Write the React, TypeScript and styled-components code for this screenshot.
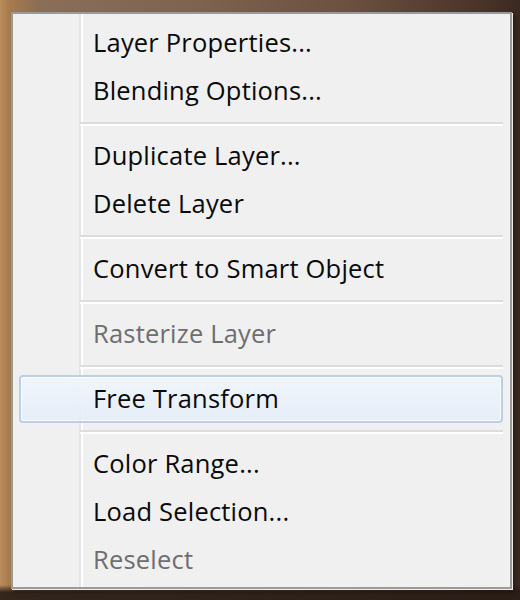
import React from "react";
import styled, { createGlobalStyle } from "styled-components";

const Global = createGlobalStyle`
  html, body { margin: 0; padding: 0; }
  body {
    width: 520px;
    height: 600px;
    overflow: hidden;
    background:
      linear-gradient(to bottom, rgba(0,0,0,0) 0px, rgba(0,0,0,0) 585px, rgba(40,28,22,0.9) 592px),
      linear-gradient(to right, #b98c5c 0px, #a67a4c 10px, #8a6e58 40px, #7d6450 200px, #6a5140 350px, #4a3428 480px, #3a2920 520px);
  }
`;

const Page = styled.div`
  padding: 12px 8px 0 11px;
`;

const Menu = styled.div`
  box-sizing: border-box;
  width: 501px;
  height: 577px;
  border: 2px solid #9a9a9a;
  background-color: #f0f0f0;
  background-image: linear-gradient(
    to right,
    transparent 66px,
    #e2e3e3 66px,
    #e2e3e3 68px,
    #ffffff 68px,
    #ffffff 70px,
    transparent 70px
  );
  box-shadow: 1px 1px 0 #f4ece8, 3px 3px 4px rgba(0, 0, 0, 0.35);
  padding: 5px 7px 3px 6px;
  display: flex;
  flex-direction: column;
  font-family: "Open Sans", "Noto Sans", sans-serif;
`;

const Item = styled.div<{ $disabled?: boolean; $active?: boolean }>`
  box-sizing: border-box;
  height: 48px;
  display: flex;
  align-items: center;
  padding-left: 72px;
  padding-bottom: 3px;
  font-size: 25.5px;
  letter-spacing: 0.2px;
  color: ${(p) => (p.$disabled ? "#6e6e6e" : "#0a0a0a")};
  border-radius: 4px;
  border: 2px solid ${(p) => (p.$active ? "#bccfe6" : "transparent")};
  background: ${(p) =>
    p.$active
      ? "linear-gradient(to bottom, rgba(241,246,252,0.92), rgba(228,237,249,0.92))"
      : "transparent"};
  box-shadow: ${(p) => (p.$active ? "inset 0 0 0 1px rgba(255,255,255,0.8)" : "none")};
`;

const Separator = styled.div`
  height: 17px;
  display: flex;
  align-items: center;
  padding-left: 61px;
  &::before {
    content: "";
    flex: 1;
    height: 2px;
    background: #dcdcdc;
    border-bottom: 2px solid #ffffff;
  }
`;

type Entry = { label: string; disabled?: boolean; active?: boolean } | "sep";

const entries: Entry[] = [
  { label: "Layer Properties..." },
  { label: "Blending Options..." },
  "sep",
  { label: "Duplicate Layer..." },
  { label: "Delete Layer" },
  "sep",
  { label: "Convert to Smart Object" },
  "sep",
  { label: "Rasterize Layer", disabled: true },
  "sep",
  { label: "Free Transform", active: true },
  "sep",
  { label: "Color Range..." },
  { label: "Load Selection..." },
  { label: "Reselect", disabled: true },
];

export default function App() {
  return (
    <>
      <Global />
      <Page>
        <Menu>
          {entries.map((e, i) =>
            e === "sep" ? (
              <Separator key={i} />
            ) : (
              <Item key={i} $disabled={e.disabled} $active={e.active}>
                {e.label}
              </Item>
            )
          )}
        </Menu>
      </Page>
    </>
  );
}
